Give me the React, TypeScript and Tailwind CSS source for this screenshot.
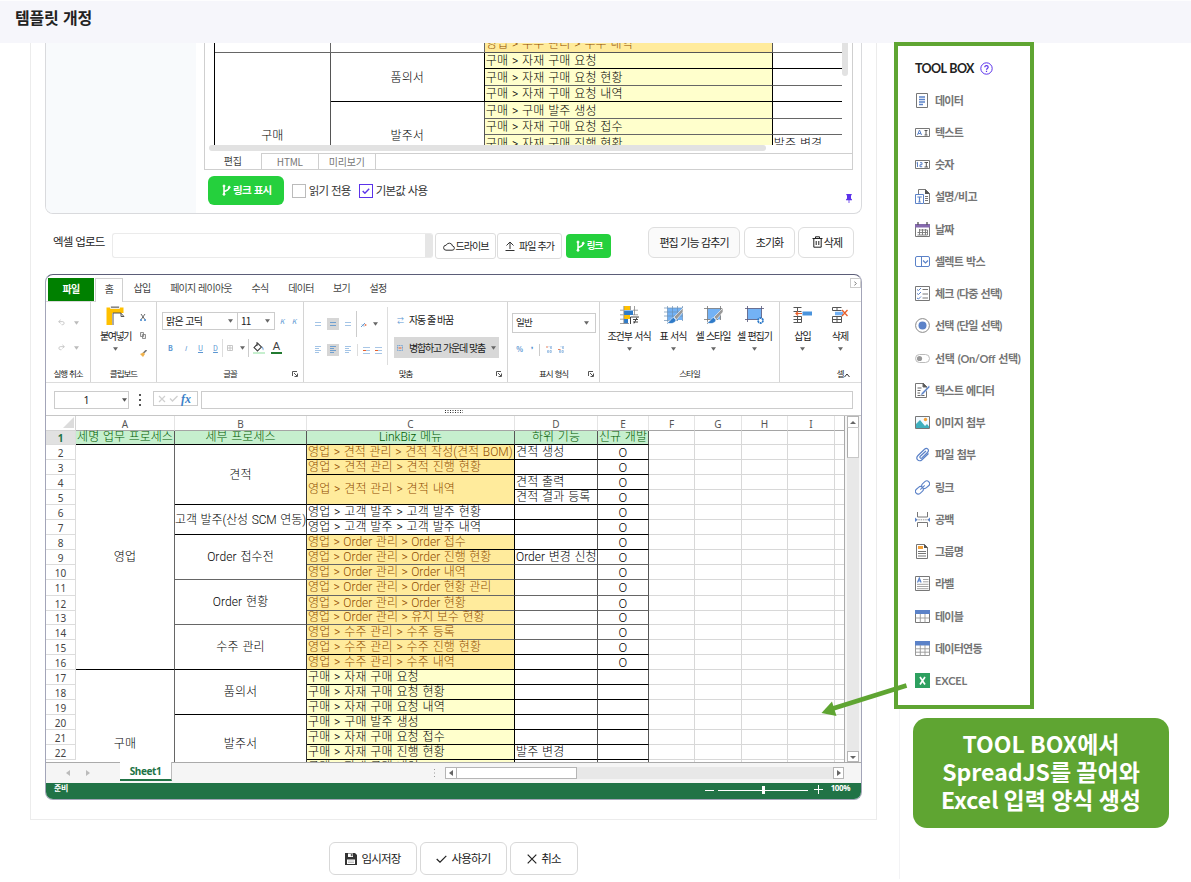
import React from 'react';

/* ---------- shared pieces ---------- */

const Caret = ({ c = 'text-[#666]' }: { c?: string }) => (
  <svg width="5" height="4" viewBox="0 0 6 4" className={`shrink-0 ${c}`}>
    <path d="M0 0h6L3 4z" fill="currentColor" />
  </svg>
);

const Launcher = () => (
  <svg width="6" height="6" viewBox="0 0 6 6" className="shrink-0">
    <path d="M.5 5V.5H5M2 2l3 3M5.500 2.500v3h-3" fill="none" stroke="#555" strokeWidth="1" />
  </svg>
);

const Branch = () => (
  <svg width="9" height="12" viewBox="0 0 9 12" className="shrink-0" fill="none" stroke="#fff">
    <path d="M2 2v8.500M2 8.500c0-2 5-1.500 5-5" strokeWidth="1.500" />
    <circle cx="2" cy="2" r="1" fill="#fff" />
    <circle cx="2" cy="10.300" r="1" fill="#fff" />
    <circle cx="7.200" cy="3.200" r="1" fill="#fff" />
  </svg>
);

/* ---------- first form card ---------- */

const previewRows = [
  '구매 > 자재 구매 요청',
  '구매 > 자재 구매 요청 현황',
  '구매 > 자재 구매 요청 내역',
  '구매 > 구매 발주 생성',
  '구매 > 자재 구매 요청 접수',
  '구매 > 자재 구매 진행 현황',
];

const Preview = () => (
  <div className="ml-[9px] h-[102px] w-[628px] overflow-hidden border-l border-black">
    <div className="-mt-[7px] grid grid-cols-[116px_154px_288px_69px] grid-rows-[17px_16px_17px_16px_17px_16px_17px] font-['Roboto','Noto_Sans_CJK_KR',sans-serif] text-[12px] leading-none font-light tracking-[0.1px] text-black [word-spacing:0.8px]">
      <div className="border-r border-b border-[#666]" />
      <div className="border-r border-b border-[#666]" />
      <div className="flex items-center border-r border-b border-[#555] bg-[#ffeb9c] pl-px text-[#8f4c00]">영업 &gt; 수주 관리 &gt; 수주 내역</div>
      <div className="border-b border-[#666]" />
      <div className="row-span-6 flex items-end justify-center border-r border-[#555] pb-[10px]">구매</div>
      <div className="row-span-3 flex items-center justify-center border-r border-b border-black pt-px">품의서</div>
      {previewRows.slice(0, 3).map((t, i) => (
        <React.Fragment key={t}>
          <div className={`col-start-3 flex items-center border-r border-b bg-[#ffffcc] pt-px pl-px ${i === 1 ? 'border-[#666] border-r-black' : 'border-black'}`}>{t}</div>
          <div className={`col-start-4 border-b ${i === 1 ? 'border-[#666]' : 'border-black'}`} />
        </React.Fragment>
      ))}
      <div className="col-start-2 row-span-3 row-start-5 flex items-end justify-center border-r border-[#555] pb-[10px]">발주서</div>
      {previewRows.slice(3).map((t, i) => (
        <React.Fragment key={t}>
          <div className="col-start-3 flex items-center border-r border-b border-[#666] border-r-black bg-[#ffffcc] pt-px pl-px">{t}</div>
          <div className="col-start-4 flex items-center border-b border-[#666] pt-px pl-px">{i === 2 ? '발주 변경' : ''}</div>
        </React.Fragment>
      ))}
    </div>
  </div>
);

const FormCard = () => (
  <div className="flex h-[171px] w-[817px] overflow-hidden rounded-b-lg border border-t-0 border-[#d9dadd]">
    <div className="w-[150px] bg-[#f8fafc]" />
    <div className="ml-[8px] w-[658px]">
      <div className="h-[127px] w-[649px] border border-t-0 border-[#cfcfcf]">
        <div className="flex h-[102px]">
          <Preview />
          <div className="h-[33px] w-[6px] rounded-b-full bg-[#e2e2e2]" />
        </div>
        <div className="ml-[4px] h-[6px] w-[557px] rounded-full bg-[#e2e2e2]" />
        <div className="mt-[2px] flex h-[16px] text-[10px] leading-none tracking-[-0.2px] text-[#777]">
          <div className="flex w-[56px] items-center justify-center text-[#444]">편집</div>
          <div className="flex w-[57px] items-center justify-center border-t border-l border-[#cfcfcf]">HTML</div>
          <div className="flex w-[57px] items-center justify-center border-t border-l border-[#cfcfcf]">미리보기</div>
          <div className="flex-1 border-t border-l border-[#cfcfcf]" />
        </div>
      </div>
      <div className="mt-[6px] flex items-center pl-[4px] text-[11.500px] leading-none tracking-[-0.85px] text-[#333]">
        <div className="flex h-[29px] w-[76px] items-center justify-center gap-[2px] rounded-md bg-[#25d03d] pb-px pl-[2px] text-[10.500px] font-bold tracking-[-0.7px] text-white">
          <Branch />링크 표시
        </div>
        <div className="ml-[8px] h-[14px] w-[14px] border border-[#bbb]" />
        <div className="ml-[3px] w-[43px] whitespace-nowrap">읽기 전용</div>
        <div className="ml-[7px] flex h-[14px] w-[14px] items-center justify-center border border-[#5b32ea]">
          <svg width="8" height="6" viewBox="0 0 8 6"><path d="M.7 3l2.200 2.200L7.200.800" fill="none" stroke="#5b32ea" strokeWidth="1.400" /></svg>
        </div>
        <div className="ml-[3px]">기본값 사용</div>
        <svg width="6" height="9" viewBox="0 0 6 9" className="mt-[16px] mr-[9px] ml-auto">
          <path d="M.3 0h5.400v1.200H5v3.300l1 1v.7H0v-.7l1-1V1.200H.3zM2.600 6h.8v3h-.8z" fill="#5b32ea" />
        </svg>
      </div>
    </div>
  </div>
);

/* ---------- upload row ---------- */

const UploadRow = () => (
  <div className="mt-[13px] flex h-[32px] items-start text-[11px] leading-none tracking-[-0.95px] text-[#222]">
    <div className="mt-[9px] ml-[8px] w-[59px] text-[11.500px] tracking-[-0.85px] whitespace-nowrap">엑셀 업로드</div>
    <div className="mt-[6px] flex h-[25px] w-[321px] justify-end overflow-hidden rounded-[3px] border border-r-0 border-[#ebebeb]">
      <div className="h-full w-[8px] bg-[#e6e6e6]" />
    </div>
    <div className="mt-[6px] ml-[2px] flex h-[26px] w-[61px] items-center justify-center gap-px rounded-[3px] border border-[#ddd] text-[10px] tracking-[-1px]">
      <svg width="12" height="9" viewBox="0 0 12 9"><path d="M3 8.200h6a2.100 2.100 0 0 0 .5-4.200A3.300 3.300 0 0 0 3.200 3.200 2.500 2.500 0 0 0 3 8.200z" fill="none" stroke="#333" /></svg>
      드라이브
    </div>
    <div className="mt-[6px] ml-px flex h-[26px] w-[65px] items-center justify-center gap-[4px] rounded-[3px] border border-[#ddd] text-[10px] tracking-[-1px]">
      <svg width="10" height="10" viewBox="0 0 10 10"><path d="M5 8V1M1.500 4.500L5 1l3.500 3.500M.5 9.500h9" fill="none" stroke="#333" /></svg>
      파일 추가
    </div>
    <div className="mt-[7px] ml-[4px] flex h-[24px] w-[45px] items-center justify-center gap-[2px] rounded bg-[#25d03d] pl-px text-[9.500px] font-bold text-white"><Branch />링크</div>
    <div className="ml-[37px] flex h-[31px] w-[92px] items-center justify-center rounded-md border border-[#dedede] bg-[#fafafa] pb-px">편집 기능 감추기</div>
    <div className="ml-[4px] flex h-[31px] w-[51px] items-center justify-center rounded-md border border-[#dedede] pb-px">초기화</div>
    <div className="ml-[3px] flex h-[31px] w-[56px] items-center justify-center gap-px rounded-md border border-[#dedede] pb-px pl-[2px]">
      <svg width="11" height="12" viewBox="0 0 11 12"><path d="M.5 2.500h10M3.500 2.500V.8h4v1.700M1.800 2.500v8.700h7.400V2.500M4.200 5v4M6.800 5v4" fill="none" stroke="#222" /></svg>
      삭제
    </div>
  </div>
);

/* ---------- ribbon ---------- */

const Lines = ({ on = false, k = 0 }: { on?: boolean; k?: number }) => (
  <div className={`flex h-[12px] w-[12px] items-center justify-center ${on ? 'bg-[#d6d6d6]' : ''}`}>
    <svg width="6" height="8" viewBox="0 0 6 8" stroke={on ? '#6f9fcf' : '#a3c4e6'} strokeWidth="1">
      {k === 0 ? <path d="M0 2.500h6M0 5.500h6" /> : <path d="M0 .5h6M0 2.500h4M0 4.500h6M0 6.500h4" />}
    </svg>
  </div>
);

const Brush = () => (
  <g>
    <path d="M19 2L10 11l2.500 2.500L19 6z" fill="#999" stroke="#fff" strokeWidth=".6" />
    <path d="M9.500 11.500c-3 .5-2.500 4-6.500 5 3 2 8.500 1 9-2.500z" fill="#2f7bc9" stroke="#fff" strokeWidth=".6" />
  </g>
);

const bigIcons: Record<string, React.ReactNode> = {
  cond: (
    <>
      <path d="M4 0h6v4H4zM4 9h6v4H4z" fill="#ffc000" />
      <path d="M4 4.500h9v4.500H4z" fill="#2f7bc9" />
      <path d="M4 13h4v4.500H4z" fill="#2f7bc9" />
      <path d="M0 4.200h3.500M13 4.200h5M0 8.800h3.500M13 8.800h5M0 13.200h4M0 17.500h9M3.800 0v18M10.500 0v4M14.500 0v9" stroke="#888" strokeWidth=".8" fill="none" />
      <path d="M10.500 18v-7H19" stroke="#444" fill="none" /><path d="M13 13.500h5M13 16h5M17 11.500l-3 6" stroke="#444" fill="none" />
    </>
  ),
  table: (
    <>
      <path d="M3.500 2h15v12h-15z" fill="#73b2f5" />
      <path d="M0 2h19M0 6h19M0 10h19M0 14.500h14M3.500 0v18M8.500 0v15M13.500 0v15M18.500 0v15" stroke="#6a8fb5" strokeWidth=".7" fill="none" />
      <Brush />
    </>
  ),
  style: (
    <>
      <path d="M3.500 2.500h13v11h-13z" fill="#73b2f5" />
      <path d="M0 2.500h19M0 13.500h14M3.500 0v18M16.500 0v14" stroke="#777" strokeWidth=".8" fill="none" />
      <Brush />
    </>
  ),
  editor: (
    <>
      <path d="M2.500 2.500h14v11h-14z" fill="#73b2f5" />
      <path d="M0 2.500h19M0 13.500h14M2.500 0v16M16.500 0v14" stroke="#557" strokeWidth=".8" fill="none" />
      <circle cx="15.500" cy="14.500" r="2.500" fill="#fff" stroke="#2f7bc9" strokeWidth="1.800" strokeDasharray="2 .6" />
    </>
  ),
  insert: (
    <>
      <path d="M.5 1.500h8M.5 5.500h8M4.500 1.500v4M.5 10.500h8v6h-8M4.500 10.500v6M.5 13.500h8" stroke="#555" fill="none" />
      <path d="M9.500 5.500H19v4H9.500z" fill="#4a94dd" /><path d="M9 7.500H3M5 5.500L3 7.500l2 2" stroke="#e8602c" fill="none" strokeWidth="1.200" />
    </>
  ),
  remove: (
    <>
      <path d="M1.500 1.500h9M1.500 4.500h9M1.500 1.500v3M6 1.500v3M1.500 10.500h9v6h-9zM6 10.500v6M1.500 13.500h9" stroke="#555" fill="none" />
      <path d="M4 5.700h8v3.600H4z" fill="#73b2f5" /><path d="M11 4l5.500 6M16.500 4L11 10" stroke="#e8602c" fill="none" strokeWidth="1.300" />
    </>
  ),
};

const Big = ({ w, icon, label }: { w: string; icon: string; label: string }) => (
  <div className={`flex flex-col items-center ${w}`}>
    <svg width="19" height="19" viewBox="0 0 19 19">{bigIcons[icon]}</svg>
    <div className="mt-[6px] text-[10px] leading-none tracking-[-1px] whitespace-nowrap">{label}</div>
    <div className="mt-[6px] flex"><Caret /></div>
  </div>
);

const Group = ({ w, label, launch, children }: { w: string; label: string; launch?: boolean; children: React.ReactNode }) => (
  <div className={`flex h-[80px] flex-col border-r border-[#d4d4d4] ${w}`}>
    <div className="h-[65px]">{children}</div>
    <div className="flex h-[13px] items-center text-[8.500px] leading-none tracking-[-1px]">
      <div className="flex flex-1 justify-center whitespace-nowrap">{label}</div>
      {launch && <div className="mr-[5px] -ml-[11px]"><Launcher /></div>}
    </div>
  </div>
);

const Mini = ({ ch, w = 'w-[15px]', cls = '' }: { ch: string; w?: string; cls?: string }) => (
  <div className={`flex justify-center text-[7px] leading-none text-[#5b96d2] ${w} ${cls}`}>{ch}</div>
);

const ribbonTabs: [string, string][] = [
  ['삽입', 'w-[38px]'], ['페이지 레이아웃', 'w-[80px]'], ['수식', 'w-[38px]'], ['데이터', 'w-[44px]'], ['보기', 'w-[37px]'], ['설정', 'w-[36px]'],
];

const Ribbon = () => (
  <div className="text-[#222]">
    <div className="flex h-[27px] border-b border-[#d9d9d9] pt-[3px] pl-[2px] text-[10px] leading-none tracking-[-0.75px] text-[#444]">
      <div className="flex h-[23px] w-[46px] items-center justify-center bg-[#008000] pb-[2px] font-bold text-white">파일</div>
      <div className="ml-px flex h-[24px] w-[28px] items-center justify-center border border-b-0 border-[#d0d0d0] bg-white pb-[3px]">홈</div>
      {ribbonTabs.map(([t, w]) => (
        <div key={t} className={`flex h-[20px] items-center justify-center whitespace-nowrap ${w}`}>{t}</div>
      ))}
      <div className="ml-auto flex h-[10px] w-[11px] items-center justify-center border border-[#ccc]">
        <svg width="3" height="5" viewBox="0 0 3 5"><path d="M.3.5l2 2-2 2" fill="none" stroke="#777" /></svg>
      </div>
    </div>
    <div className="flex h-[81px] border-b border-[#dcdcdc]">
      <Group w="w-[45px]" label="실행 취소">
        {[0, 1].map((i) => (
          <div key={i} className={`flex items-center gap-[9px] pl-[12px] ${i ? 'mt-[18px]' : 'pt-[17px]'}`}>
            <svg width="7" height="7" viewBox="0 0 8 7" className={i ? '-scale-x-100' : ''}><path d="M3 .5L.7 2.500 3 4.500M1 2.500h4.500c2 0 2 3.500 0 3.500H4" fill="none" stroke="#c4c4c4" /></svg>
            <Caret c="text-[#bbb]" />
          </div>
        ))}
      </Group>
      <Group w="w-[66px]" label="클립보드">
        <div className="flex pt-[4px]">
          <div className="ml-[8px] flex w-[33px] flex-col items-center">
            <svg width="19" height="19" viewBox="0 0 19 19">
              <path d="M.5 1.500h17V7H6v12H.5z" fill="#ffc000" /><path d="M4.500 0h9v2.500h-9z" fill="#888" stroke="#fff" strokeWidth=".8" />
              <path d="M7 19V7h8v3.500h3L15 7.300" fill="none" stroke="#555" />
            </svg>
            <div className="mt-[6px] text-[10px] leading-none tracking-[-1.400px] whitespace-nowrap">붙여넣기</div>
            <div className="mt-[6px] flex"><Caret /></div>
          </div>
          <div className="ml-[7px] flex flex-col items-center gap-[11px] pt-[8px]">
            <svg width="6" height="7" viewBox="0 0 6 7"><path d="M1 0l3.500 5M5 0L1.500 5" stroke="#666" fill="none" /><path d="M0 6h2M4 6h2" stroke="#3a7fc8" strokeWidth="1.500" /></svg>
            <svg width="6" height="7" viewBox="0 0 6 7"><path d="M.5.5h3v4h-3zM2.500 2.500h3v4h-3z" fill="#eee" stroke="#777" strokeWidth=".8" /></svg>
            <svg width="8" height="7" viewBox="0 0 8 7"><path d="M7.500 0L4 3.500" stroke="#777" strokeWidth="1.600" /><path d="M4.500 2.500L1 4l3 3 2-3z" fill="#f0b24c" /></svg>
          </div>
        </div>
      </Group>
      <Group w="w-[147px]" label="글꼴" launch>
        <div className="flex items-center pt-[10px] pl-[5px] text-[10px] leading-none tracking-[-0.8px]">
          <div className="flex h-[18px] w-[76px] items-center justify-between border border-[#ccc] pr-[4px] pl-[3px]">맑은 고딕<Caret /></div>
          <div className="-ml-px flex h-[18px] w-[38px] items-center justify-between border border-[#ccc] pr-[4px] pl-[3px]">11<Caret /></div>
          <Mini ch="K" w="w-[13px]" cls="italic" /><Mini ch="K" w="w-[11px]" cls="italic" />
        </div>
        <div className="mt-[8px] flex h-[20px] items-center pl-[6px]">
          <Mini ch="B" cls="font-bold" /><Mini ch="I" cls="italic" /><Mini ch="U" cls="underline" /><Mini ch="D" cls="underline" />
          <div className="-ml-px h-[18px] w-px bg-[#ddd]" />
          <svg width="6" height="6" viewBox="0 0 6 6" className="ml-[4px]"><path d="M.5.5h5v5h-5zM3 .5v5M.5 3h5" fill="none" stroke="#bbb" strokeWidth=".8" /></svg>
          <div className="ml-[7px] flex"><Caret /></div>
          <div className="ml-[3px] h-[18px] w-px bg-[#ccc]" />
          <svg width="12" height="12" viewBox="0 0 12 12" className="ml-[4px]"><path d="M5 1.500L1 5.500l3.500 3.500 4-4zM4 0v4" fill="none" stroke="#444" strokeWidth="1.100" /><path d="M9 4.500c2 1.500 1.500 3 1 4z" fill="#3a7fc8" /><path d="M0 10h12v2H0z" fill="#c6efce" /></svg>
          <div className="ml-[6px] flex h-[12px] w-[11px] items-end justify-center border-b-2 border-[#217a30] font-['Liberation_Sans'] text-[11px] leading-none text-[#444]">A</div>
        </div>
      </Group>
      <Group w="w-[204px]" label="맞춤" launch>
        <div className="flex">
          <div className="flex w-[83px] flex-col pl-[8px]">
            <div className="mt-[12px] flex h-[20px] items-center gap-[3px]">
              <Lines /><Lines on /><Lines />
              <div className="-ml-px h-[26px] w-px bg-[#ccc]" />
              <svg width="7" height="7" viewBox="0 0 7 7"><path d="M1 6l4-4M2 3.500l2 2" stroke="#6a9fd4" /><circle cx="5.500" cy="4" r="1" fill="#e8805c" /></svg>
              <div className="ml-[3px] flex"><Caret /></div>
            </div>
            <div className="mt-[6px] flex h-[20px] items-center gap-[3px]">
              <Lines k={1} /><Lines on k={1} /><Lines k={1} />
              <div className="h-[12px] w-px bg-[#ddd]" />
              {[0, 1].map((i) => (
                <svg key={i} width="7" height="7" viewBox="0 0 7 7" className="ml-[2px]"><path d="M0 .5h7M3 3.500h4M0 6.500h7" stroke="#9ec0e3" strokeWidth=".9" /><path d="M0 3.500h3" stroke="#e8602c" /></svg>
              ))}
            </div>
          </div>
          <div className="mt-[5px] h-[58px] w-px bg-[#ddd]" />
          <div className="pl-[6px] text-[10px] leading-none tracking-[-1.200px]">
            <div className="mt-[12px] flex h-[12px] items-center gap-[6px] pl-[3px] whitespace-nowrap"><Mini ch="⇄" w="w-[6px]" />자동 줄 바꿈</div>
            <div className="mt-[11px] flex h-[21px] w-[105px] items-center bg-[#d8d8d8] pl-[3px] whitespace-nowrap">
              <svg width="6" height="6" viewBox="0 0 6 6" className="mr-[6px]"><path d="M.5.5h5v5h-5z" fill="none" stroke="#6a9fd4" strokeDasharray="1 .6" /><path d="M1.500 3h3" stroke="#e8602c" /></svg>
              병합하고 가운데 맞춤<span className="mr-[3px] ml-auto"><Caret /></span>
            </div>
          </div>
        </div>
      </Group>
      <Group w="w-[92px]" label="표시 형식" launch>
        <div className="mt-[11px] ml-[4px] flex h-[20px] w-[84px] items-center justify-between border border-[#ccc] pr-[6px] pl-[3px] text-[9.500px] leading-none tracking-[-0.75px]">일반<Caret /></div>
        <div className="mt-[10px] flex h-[13px] items-center pl-[4px]">
          <Mini ch="%" cls="font-bold" /><Mini ch="❜" w="w-[9px]" cls="font-bold" /><div className="ml-[3px] h-[12px] w-px bg-[#ccc]" />
          {[0, 1].map((i) => (
            <svg key={i} width="6" height="7" viewBox="0 0 6 7" className="ml-[6px]">
              <path d="M2.500.7h1M4.500.5h1.200v2H4.500zM1.500 4.500h1.200v2H1.500zM4 4.500h1.300v2H4z" fill="none" stroke="#8db6e0" strokeWidth=".8" />
              <path d={i ? 'M0 3.500h2.500' : 'M0 1h2'} stroke="#e8805c" />
            </svg>
          ))}
        </div>
      </Group>
      <Group w="w-[180px]" label="스타일">
        <div className="flex pt-[4px] pl-[5px]">
          <Big w="w-[48px]" icon="cond" label="조건부 서식" />
          <Big w="w-[40px]" icon="table" label="표 서식" />
          <Big w="w-[40px]" icon="style" label="셀 스타일" />
          <Big w="w-[43px]" icon="editor" label="셀 편집기" />
        </div>
      </Group>
      <div className="flex h-[80px] w-[81px] flex-col">
        <div className="flex h-[65px] pt-[4px] pl-[4px]">
          <Big w="w-[37px]" icon="insert" label="삽입" />
          <Big w="w-[38px]" icon="remove" label="삭제" />
        </div>
        <div className="flex h-[13px] items-center justify-end pr-[11px] text-[8.500px] leading-none tracking-[-0.6px]">
          셀<svg width="6" height="5" viewBox="0 0 6 5" className="mt-[4px]"><path d="M.5 4L3 1l2.500 3" fill="none" stroke="#333" /></svg>
        </div>
      </div>
    </div>
  </div>
);

const FormulaBar = () => (
  <div className="h-[33px] border-b border-[#c6c6c6] pl-[8px]">
    <div className="flex h-[27px] items-start pt-[8px] font-['Noto_Sans']">
      <div className="flex h-[18px] w-[75px] items-center border border-[#ccc] text-[10.500px] leading-none text-[#222]">
        <span className="flex-1 pr-[5px] pl-px text-center">1</span><span className="mr-[1px]"><Caret c="text-[#555]" /></span>
      </div>
      <svg width="2" height="12" viewBox="0 0 2 12" className="mt-[3px] ml-[10px]" fill="#555"><path d="M0 0h2v2H0zM0 5h2v2H0zM0 10h2v2H0z" /></svg>
      <div className="ml-[12px] flex h-[15px] w-[45px] items-center gap-[3px] border border-[#ccc] pl-[4px]">
        <svg width="8" height="8" viewBox="0 0 8 8"><path d="M1 1l6 6M7 1L1 7" stroke="#d0d0d0" strokeWidth="1.200" /></svg>
        <svg width="9" height="7" viewBox="0 0 9 7"><path d="M1 3.500L3.500 6 8.500 1" stroke="#d0d0d0" strokeWidth="1.400" fill="none" /></svg>
        <span className="font-['Liberation_Serif'] text-[12px] leading-none font-bold text-[#3a7fc8] italic">fx</span>
      </div>
      <div className="ml-[3px] h-[18px] w-[652px] border border-[#ccc]" />
    </div>
    <svg width="18" height="4" viewBox="0 0 18 4" className="ml-[391px]"><path d="M0 .5h18M0 2.500h18" stroke="#333" strokeDasharray="1 1.500" /></svg>
  </div>
);

/* ---------- sheet grid ---------- */

type Tone = 'amber' | 'lemon' | 'plain';
const tones: Record<Tone, string> = {
  amber: 'bg-[#ffeb9c] text-[#8f4c00]',
  lemon: 'bg-[#ffffcc] text-black',
  plain: 'bg-white text-black',
};

const menu: { r: number; s?: number; t: string; tone: Tone }[] = [
  { r: 3, t: '영업 > 견적 관리 > 견적 작성(견적 BOM)', tone: 'amber' },
  { r: 4, t: '영업 > 견적 관리 > 견적 진행 현황', tone: 'amber' },
  { r: 5, s: 2, t: '영업 > 견적 관리 > 견적 내역', tone: 'amber' },
  { r: 7, t: '영업 > 고객 발주 > 고객 발주 현황', tone: 'plain' },
  { r: 8, t: '영업 > 고객 발주 > 고객 발주 내역', tone: 'plain' },
  { r: 9, t: '영업 > Order 관리 > Order 접수', tone: 'amber' },
  { r: 10, t: '영업 > Order 관리 > Order 진행 현황', tone: 'amber' },
  { r: 11, t: '영업 > Order 관리 > Order 내역', tone: 'amber' },
  { r: 12, t: '영업 > Order 관리 > Order 현황 관리', tone: 'amber' },
  { r: 13, t: '영업 > Order 관리 > Order 현황', tone: 'amber' },
  { r: 14, t: '영업 > Order 관리 > 유지 보수 현황', tone: 'amber' },
  { r: 15, t: '영업 > 수주 관리 > 수주 등록', tone: 'amber' },
  { r: 16, t: '영업 > 수주 관리 > 수주 진행 현황', tone: 'amber' },
  { r: 17, t: '영업 > 수주 관리 > 수주 내역', tone: 'amber' },
  { r: 18, t: '구매 > 자재 구매 요청', tone: 'lemon' },
  { r: 19, t: '구매 > 자재 구매 요청 현황', tone: 'lemon' },
  { r: 20, t: '구매 > 자재 구매 요청 내역', tone: 'lemon' },
  { r: 21, t: '구매 > 구매 발주 생성', tone: 'lemon' },
  { r: 22, t: '구매 > 자재 구매 요청 접수', tone: 'lemon' },
  { r: 23, t: '구매 > 자재 구매 진행 현황', tone: 'lemon' },
  { r: 24, t: '구매 > 자재 구매 내역', tone: 'lemon' },
];

const groupsB: [number, number, string][] = [
  [3, 4, '견적'], [7, 2, '고객 발주(산성 SCM 연동)'], [9, 3, 'Order 접수전'], [12, 3, 'Order 현황'], [15, 3, '수주 관리'], [18, 3, '품의서'],
];

const sub: Record<number, string> = { 3: '견적 생성', 5: '견적 출력', 6: '견적 결과 등록', 10: 'Order 변경 신청', 23: '발주 변경' };
const soft = new Set([10, 11, 12, 13, 14, 15]);
const rowNumbers = Array.from({ length: 22 }, (_, i) => i + 1);
const at = (row: number, col: number, span = 1): React.CSSProperties => ({ gridRow: `${row} / span ${span}`, gridColumn: col });

const SheetGrid = () => (
  <div className="grid h-[346px] w-[799px] grid-cols-[30px_99px_132px_208px_83px_51px_46px_47px_46px_47px_10px] grid-rows-[15px_14px_15px_15px_15px_15px_15px_15px_15px_15px_15px_16px_15px_14px_15px_15px_15px_15px_15px_15px_15px_15px_15px_15px] overflow-hidden border-r border-[#aaa] font-['Roboto','Noto_Sans_CJK_KR',sans-serif] text-[12px] leading-none font-light tracking-[0.1px] text-black [word-spacing:0.8px]">
    <div className="flex items-end justify-end border-r border-b border-[#d4d4d4] pr-[1px] pb-[2px]">
      <svg width="11" height="11" viewBox="0 0 11 11"><path d="M11 0v11H0z" fill="#dcdcdc" /></svg>
    </div>
    {['A', 'B', 'C', 'D', 'E', 'F', 'G', 'H', 'I', ''].map((c, i) => (
      <div key={i} className="flex items-center justify-center border-r border-b border-r-[#e4e4e4] border-b-[#a5a5a5] pt-px font-['Noto_Sans'] text-[10px] font-normal tracking-normal text-[#555]">{c}</div>
    ))}
    {rowNumbers.map((n) => (
      <div key={n} style={at(n + 1, 1)} className={`flex items-center justify-center border-r border-b border-[#dcdcdc] pt-px font-['Noto_Sans'] text-[10px] tracking-normal ${n === 1 ? 'bg-[#e1e1e1] font-bold text-[#217346]' : 'font-normal text-[#444]'}`}>{n}</div>
    ))}
    {['세명 업무 프로세스', '세부 프로세스', 'LinkBiz 메뉴', '하위 기능', '신규 개발'].map((t, i) => (
      <div key={t} style={at(2, i + 2)} className="flex items-center justify-center border-r border-b border-black border-r-[#555] bg-[#c6efce] pb-[2px] tracking-[0px] whitespace-nowrap text-[#005a00]">{t}</div>
    ))}
    <div style={at(3, 2, 15)} className="flex items-center justify-center border-r border-b border-black border-r-[#666]">영업</div>
    <div style={at(18, 2, 7)} className="flex items-end justify-center border-r border-[#666] pb-[25px]">구매</div>
    {groupsB.map(([r, s, t]) => (
      <div key={t} style={at(r, 3, s)} className={`flex items-center justify-center border-r border-b border-r-[#333] whitespace-nowrap ${r === 7 ? 'tracking-[-0.1px]' : ''} ${r === 9 || r === 12 ? 'border-b-[#666]' : 'border-b-black'}`}>{t}</div>
    ))}
    <div style={at(21, 3, 4)} className="flex items-end justify-center border-r border-[#333] pb-[25px]">발주서</div>
    {menu.map((m) => (
      <div key={m.r} style={at(m.r, 4, m.s ?? 1)} className={`flex items-center border-r border-b border-r-black pb-px pl-px whitespace-nowrap ${m.r === 3 ? 'tracking-[0px]' : m.r > 8 && m.r < 15 ? 'tracking-[0px] [word-spacing:0.6px]' : ''} ${tones[m.tone]} ${soft.has(m.r) ? 'border-b-[#666]' : 'border-b-black'}`}>{m.t}</div>
    ))}
    {rowNumbers.map((n) => {
      const r = n + 2;
      const edge = soft.has(r) ? 'border-b-[#666]' : 'border-b-black';
      return (
        <React.Fragment key={n}>
          <div style={at(r, 5)} className={`flex items-center border-r border-b border-r-[#555] pb-px pl-px whitespace-nowrap ${r === 10 ? 'tracking-[0px]' : ''} ${edge}`}>{sub[r]}</div>
          <div style={at(r, 6)} className={`flex items-center justify-center border-r border-b border-r-[#555] pb-px font-['Noto_Sans_CJK_KR'] text-[12px] font-light ${edge}`}>{r < 18 ? 'O' : ''}</div>
        </React.Fragment>
      );
    })}
    {Array.from({ length: 23 * 5 }, (_, i) => (
      <div key={i} style={at(Math.floor(i / 5) + 2, (i % 5) + 7)} className="border-r border-b border-[#d8d8d8]" />
    ))}
  </div>
);

const ScrollButton = ({ d, cls }: { d: string; cls: string }) => (
  <div className={`flex shrink-0 items-center justify-center border border-[#b5b5b5] bg-white ${cls}`}>
    <svg width="6" height="6" viewBox="0 0 6 6"><path d={d} fill="#666" /></svg>
  </div>
);

const Spread = () => (
  <div className="mt-[15px] h-[526px] w-[817px] overflow-hidden rounded-lg border border-[#a3a5b8] border-t-[#5b5d78] bg-white">
    <Ribbon />
    <FormulaBar />
    <div className="flex h-[347px] border-b border-[#aaa]">
      <SheetGrid />
      <div className="flex flex-1 justify-center bg-[#f7f7f7]">
        <div className="flex h-[346px] w-[12px] flex-col bg-[#e8e8e8]">
          <ScrollButton d="M0 5h6L3 2z" cls="h-[12px] w-[12px]" />
          <div className="-mt-px h-[31px] border border-[#c8c8c8] border-l-[#aaa] bg-white" />
          <ScrollButton d="M0 2h6L3 5z" cls="mt-auto h-[11px] w-[12px]" />
        </div>
      </div>
    </div>
    <div className="flex h-[20px] bg-[#f5f5f5]">
      <div className="flex w-[74px] items-center gap-[16px] pl-[20px]">
        <svg width="4" height="6" viewBox="0 0 4 6"><path d="M4 0v6L0 3z" fill="#bbb" /></svg>
        <svg width="4" height="6" viewBox="0 0 4 6"><path d="M0 0v6l4-3z" fill="#bbb" /></svg>
      </div>
      <div className="-mt-px flex h-[19px] w-[52px] items-center justify-center border-r border-b-2 border-r-[#bbb] border-b-[#217346] bg-white pt-px font-['Noto_Sans'] text-[10px] leading-none font-bold tracking-[-0.400px] text-[#217346]">Sheet1</div>
      <svg width="2" height="8" viewBox="0 0 2 8" className="mt-[6px] ml-[262px]" fill="#999"><path d="M0 0h1v1H0zM0 3.500h1v1H0zM0 7h1v1H0z" /></svg>
      <div className="mt-[4px] ml-[9px] flex h-[12px] w-[399px] bg-[#e8e8e8]">
        <ScrollButton d="M5 0v6L1 3z" cls="h-[12px] w-[12px]" />
        <div className="-ml-px h-[12px] w-[121px] border border-[#b5b5b5] bg-white" />
        <ScrollButton d="M1 0v6l4-3z" cls="ml-auto h-[12px] w-[11px]" />
      </div>
    </div>
    <div className="flex h-[18px] items-start bg-[#217346] pt-px pl-[8px] text-[8px] leading-none font-bold tracking-[-0.4px] text-white">
      <div>준비</div>
      <svg width="118" height="10" viewBox="0 0 118 10" className="mr-[8px] ml-auto" stroke="#fff">
        <path d="M0 6.500h9M13 6.500h90M109 5.500h9M113.500 1v9" /><path d="M58.500 2v8" strokeWidth="3" />
      </svg>
      <div className="mr-[11px] font-['Open_Sans']">100%</div>
    </div>
  </div>
);

/* ---------- tool box ---------- */

const B = '#5b82c8';
const G = '#777';
const tools: [string, React.ReactNode][] = [
  ['데이터', <><path d="M1.500.5h11v14h-11z" fill="#fff" stroke={G} /><path d="M4 4h6M4 6.500h6M4 9h6M4 11.500h4" stroke={B} strokeWidth="1.300" /></>],
  ['텍스트', <><path d="M.5 3.500h14v8H.5z" fill="#fff" stroke={G} /><path d="M2.500 10L4.500 5l2 5M3.200 8.500h2.600" stroke={B} fill="none" /><path d="M9.500 5.500h3M11 5.500V10M9.500 10h3" stroke="#555" /></>],
  ['숫자', <><path d="M.5 3.500h14v8H.5z" fill="#fff" stroke={G} /><path d="M1.500 6l1-.7V10M5 5.700h2v2H5V9.700h2.200" stroke={B} fill="none" /><path d="M9.500 5.500h3.500M11.300 5.500V10M9.500 10h3.500" stroke="#555" /></>],
  ['설명/비고', <><path d="M3.500 6V.5h7l4 4v10H9" fill="#fff" stroke={G} /><path d="M10 0v5h5z" fill="#555" /><path d="M10 7.500h3M10 9.500h3M10 11.500h3" stroke={G} /><path d="M.5 5.500h8v9h-8z" fill="#fff" stroke={B} /><path d="M2.300 8h4.500M4.500 8v5M3.300 13h2.500" stroke={B} strokeWidth="1.200" /></>],
  ['날짜', <><path d="M.5 2.500h14v12H.5z" fill="#fff" stroke={G} /><path d="M0 2h15v3.500H0z" fill="#8569ad" /><path d="M3 0v3M12 0v3" stroke="#555" strokeWidth="1.300" /><path d="M4 8h8.500M2.500 10.500h10M2.500 13h10M4.500 7v6M7.500 7v6M10.500 7v6M12.500 8v5" stroke={G} strokeWidth=".9" /></>],
  ['셀렉트 박스', <><rect x=".5" y="2.500" width="14" height="10" rx="1.500" fill="#fff" stroke={B} /><path d="M6.500 2.500v10" stroke={B} /><path d="M8 6.500L10.500 9 13 6.500" stroke={B} fill="none" strokeWidth="1.200" /></>],
  ['체크 (다중 선택)', <><path d="M.5.5h14v14H.5z" fill="#fff" stroke={G} /><path d="M7.500 3.500H13M7.500 8H13M7.500 12H13" stroke={G} /><path d="M2 3.500l1.500 1L6 2M2 7.500l1.500 1L6 6M2 12l1.500 1L6 10.500" stroke={B} fill="none" /></>],
  ['선택 (단일 선택)', <><circle cx="7.500" cy="7.500" r="6.900" fill="#fff" stroke="#888" /><circle cx="7.500" cy="7.500" r="4" fill={B} /></>],
  ['선택 (On/Off 선택)', <><rect x=".5" y="3.500" width="14" height="8" rx="4" fill="#fff" stroke="#bbb" /><circle cx="4.500" cy="7.500" r="2.600" fill="#999" /></>],
  ['텍스트 에디터', <><path d="M.5.5h8l3 3v11H.5z" fill="#fff" stroke={G} /><path d="M8 0v4h4zM2.500 5h4M2.500 7.500h3M2.500 10h2.500M2.500 12.500h7" stroke="#666" fill="#555" /><path d="M14 2.500L6.500 10l-1 2.500L8 11.500 15 4z" fill={B} stroke="#fff" strokeWidth=".5" /></>],
  ['이미지 첨부', <><path d="M.5 1.500h14v12H.5z" fill="#f4faff" stroke={G} /><path d="M1 13V9l4-4 5 6 2-2 2 2.500V13z" fill="#3fafbd" /><circle cx="10.500" cy="4.500" r="1.700" fill="#f4a23a" /></>],
  ['파일 첨부', <path d="M11 4L5.300 9.200c-1.200 1.200.4 2.800 1.600 1.700l5.600-5.400C15 3 12 .2 9.500 2.300L3 8.500c-3 3 .8 7.200 4 4.200l6.500-6.200" fill="none" stroke={B} strokeWidth="1.200" />],
  ['링크', <g transform="rotate(-42 7.500 7.500)"><rect x="-1" y="4.700" width="8.500" height="5.600" rx="2.800" fill="none" stroke={B} strokeWidth="1.100" /><rect x="7.500" y="4.700" width="8.500" height="5.600" rx="2.800" fill="none" stroke={B} strokeWidth="1.100" /><path d="M4.500 7.500h6" stroke={B} /></g>],
  ['공백', <><path d="M2.500 0v5h10V0M2.500 15v-4.500h10V15" fill="none" stroke={G} /><path d="M1 7.800h13" stroke="#999" strokeDasharray="1.500 .8" /><path d="M0 5.500l2.500 2.300L0 10zM15 5.500l-2.500 2.300L15 10z" fill={B} /></>],
  ['그룹명', <><path d="M1.500.5h8l3 3v11h-11z" fill="#fff" stroke={G} /><path d="M9 0v4h4z" fill="#555" /><path d="M3 2h5v3H3z" fill="#f4a23a" /><path d="M3 7.500h8M3 9.500h8M3 12h8" stroke={G} /></>],
  ['라벨', <><path d="M.5.5h14v14H.5z" fill="#fff" stroke={G} /><path d="M2.500 6.500L4.300 2l1.800 4.500M3 5h2.600" stroke={B} fill="none" strokeWidth="1.200" /><path d="M8 3.500h5.500M8 5.800h5.500M2 8.300h11.500M2 10.500h11.500M2 12.700h11.500" stroke="#999" strokeWidth=".9" /></>],
  ['테이블', <><path d="M.5 1.500h14v12H.5z" fill="#fff" stroke={G} /><path d="M0 1h15v4H0z" fill={B} /><path d="M.5 9h14M5.300 5v8.500M10 5v8.500" stroke="#999" strokeWidth=".9" /></>],
  ['데이터연동', <><path d="M.5.5h14v14H.5z" fill="#fff" stroke="#999" /><path d="M0 0h15v4.500H0z" fill={B} /><path d="M.5 7.800h14M.5 11.200h14M5.300 4v10.500M10 4v10.500" stroke="#999" strokeWidth=".9" /></>],
  ['EXCEL', <><path d="M0 0h15v15H0z" fill="#2da05f" /><path d="M5 4l5 7.500M10 4l-5 7.500" stroke="#fff" strokeWidth="1.700" /></>],
];

const ToolBox = () => (
  <div className="-mt-px ml-[17px] h-[667px] w-[140px] border-4 border-[#5fa532] pt-[18px] pl-[17px] font-['Lato','Noto_Sans_CJK_KR',sans-serif]">
    <div className="flex h-[10px] items-center gap-[6px] text-[12.500px] leading-none font-bold tracking-[-0.65px] whitespace-nowrap text-[#222]">
      TOOL BOX
      <svg width="13" height="13" viewBox="0 0 13 13" className="-mt-px" fill="none" stroke="#5b32ea"><circle cx="6.500" cy="6.500" r="5.700" /><path d="M4.800 5.300c0-2.200 3.400-2.100 3.400 0 0 1.200-1.700 1-1.700 2.400M6.500 8.700v1.200" strokeWidth="1.200" /></svg>
    </div>
    <div className="mt-[10px] grid auto-rows-[32.250px]">
      {tools.map(([label, icon]) => (
        <div key={label} className="flex items-center gap-[5px] text-[11px] leading-none font-bold tracking-[-0.75px] whitespace-nowrap text-[#757575] [word-spacing:1px]">
          <svg width="15" height="15" viewBox="0 0 15 15" className="shrink-0">{icon}</svg>
          <span className={label === 'EXCEL' ? 'tracking-[-0.1px]' : label.includes('On') ? 'tracking-[-0.35px]' : ''}>{label}</span>
        </div>
      ))}
    </div>
  </div>
);

const BottomButton = ({ w, icon, label }: { w: string; icon: React.ReactNode; label: string }) => (
  <div className={`flex h-[33px] items-center justify-center gap-[4px] rounded-md border border-[#d8d8d8] ${w}`}>
    {icon}{label}
  </div>
);

export default function App() {
  return (
    <div className="relative h-[882px] w-[1191px] overflow-hidden bg-white font-['Noto_Sans_CJK_KR',sans-serif] [word-spacing:1px]">
      <header className="flex h-[43px] border-t border-[#fdfdfe] bg-[#f6f6fb] pt-[8px] pl-[15px] text-[16px] leading-none font-bold tracking-[-0.2px] text-[#222]">템플릿 개정</header>
      <div className="flex h-[839px]">
        <main className="w-[877px] pl-[30px]">
          <div className="h-[777px] w-[847px] border border-t-0 border-[#ececec] pl-[14px]">
            <FormCard />
            <UploadRow />
            <Spread />
          </div>
          <div className="mt-[22px] flex gap-[3px] pl-[299px] text-[11.500px] leading-none tracking-[-0.8px] text-[#222]">
            <BottomButton w="w-[88px]" label="임시저장" icon={<svg width="12" height="12" viewBox="0 0 12 12"><path d="M0 0h10l2 2v10H0z" fill="#333" /><path d="M3 .5h5v3.500H3zM2 6.500h8v4.500H2z" fill="#fff" /><path d="M6 1h1.300v2H6zM3 8h6M3 9.500h6" fill="#333" stroke="#888" strokeWidth=".5" /></svg>} />
            <BottomButton w="w-[87px]" label="사용하기" icon={<svg width="11" height="8" viewBox="0 0 11 8"><path d="M.7 4L4 7.200 10.300.8" fill="none" stroke="#222" strokeWidth="1.200" /></svg>} />
            <BottomButton w="w-[68px]" label="취소" icon={<svg width="10" height="10" viewBox="0 0 10 10"><path d="M.7.7l8.600 8.600M9.300.7L.7 9.300" fill="none" stroke="#222" strokeWidth="1.200" /></svg>} />
          </div>
        </main>
        <aside className="flex-1">
          <ToolBox />
          <div className="mt-[9px] ml-[36px] flex h-[110px] w-[256px] flex-col items-center justify-center rounded-[14px] bg-[#5fa532] pb-[4px] text-center text-[23px] leading-[28px] font-bold text-white [word-spacing:0px]">
            <div>TOOL BOX에서</div>
            <div>SpreadJS를 끌어와</div>
            <div>Excel 입력 양식 생성</div>
          </div>
        </aside>
      </div>
      <div className="absolute top-[709px] left-[899px] h-[170px] w-px bg-[#f3f3f5]" />
      <svg width="90" height="36" viewBox="0 0 90 36" className="absolute top-[682px] left-[820px]">
        <path d="M86.500 3.500L13 26.500" stroke="#5fa532" strokeWidth="4.500" />
        <path d="M1.500 31l10.500-11.500 4.500 14.500z" fill="#5fa532" />
      </svg>
    </div>
  );
}
